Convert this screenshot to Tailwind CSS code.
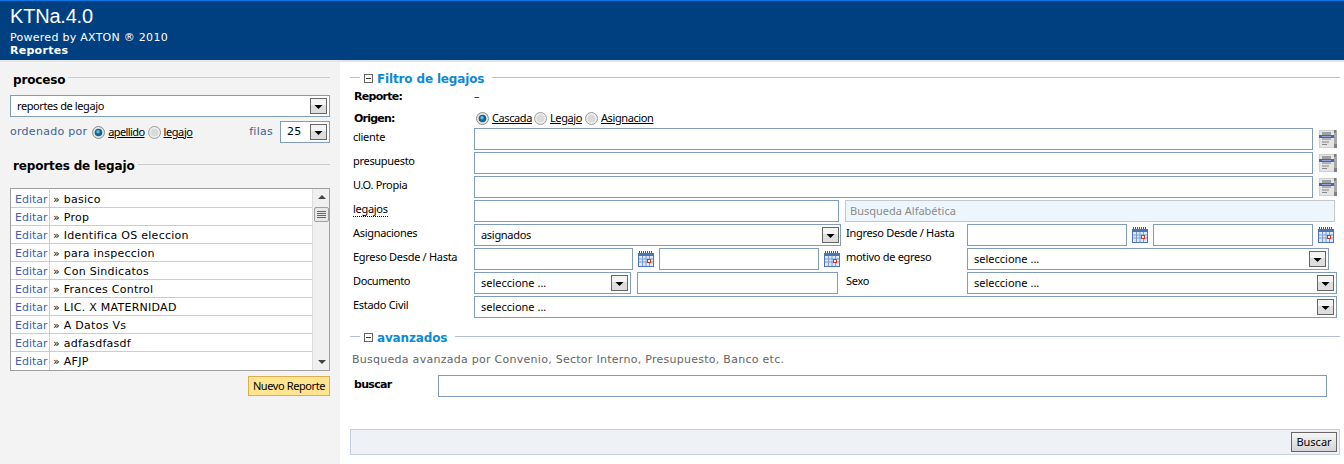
<!DOCTYPE html>
<html lang="es">
<head>
<meta charset="utf-8">
<title>KTNa.4.0</title>
<script src="https://cdn.jsdelivr.net/npm/@tailwindcss/browser@4"></script>
</head>
<body class="w-[1344px] h-[464px] overflow-hidden bg-white text-black font-['DejaVu_Sans',sans-serif] text-[11px] leading-[14px] tracking-[0.27px]">
<svg width="0" height="0" class="absolute">
  <defs>
    <symbol id="cal" viewBox="0 0 16 16">
      <rect x="0" y="2" width="16" height="14" fill="#4a74b8"/>
      <rect x="1" y="5" width="14" height="10" fill="#dfe8f6"/>
      <path d="M1 8h14M1 11h14M4.500 5v10M8 5v10M11.500 5v10" stroke="#7c9ccf" stroke-width="1" fill="none"/>
      <path d="M1 1h14" stroke="#555" stroke-width="2" stroke-dasharray="1 1"/>
      <rect x="9.500" y="8.500" width="3" height="3" fill="#fff" stroke="#e03020" stroke-width="1"/>
    </symbol>
    <symbol id="lookup" viewBox="0 0 18 18">
      <rect width="18" height="18" fill="#cfcfcf"/>
      <rect x="15" y="0" width="3" height="18" fill="#a8a8a8"/>
      <rect x="15" y="0" width="2" height="3" fill="#808080"/>
      <rect x="15" y="14" width="3" height="4" fill="#808080"/>
      <rect x="1" y="1" width="14" height="16" fill="#e4e4e4"/>
      <rect x="3" y="2" width="9" height="3" fill="#a0a0a0"/>
      <rect x="0" y="5" width="15" height="3" fill="#4a64ae"/>
      <rect x="3" y="6" width="9" height="1" fill="#8ea4da"/>
      <rect x="3" y="8" width="9" height="2" fill="#b0b0b0"/>
      <path d="M3 12h7M3 14.500h5" stroke="#858585" stroke-width="1"/>
    </symbol>
    <symbol id="radio-on" viewBox="0 0 13 13">
      <circle cx="6.500" cy="6.500" r="6" fill="#e4e4e4" stroke="#8c8c8c"/>
      <circle cx="6.500" cy="6.500" r="3.800" fill="#14648f"/>
      <circle cx="6" cy="5.800" r="1.700" fill="#5cc0e6"/>
    </symbol>
    <symbol id="radio-off" viewBox="0 0 13 13">
      <circle cx="6.500" cy="6.500" r="6" fill="#ededed" stroke="#9c9c9c"/>
      <circle cx="6.500" cy="6.500" r="3.800" fill="#dadada"/>
    </symbol>
    <symbol id="arrow" viewBox="0 0 17 16">
      <rect x="0.500" y="0.500" width="16" height="15" fill="#dedede" stroke="#666"/>
      <rect x="1" y="1" width="15" height="6" fill="#f4f4f4"/>
      <path d="M4.500 7h8l-4 4z" fill="#000"/>
    </symbol>
    <symbol id="minus" viewBox="0 0 9 9">
      <rect x="0.500" y="0.500" width="8" height="8" fill="#fff" stroke="#666"/>
      <path d="M2 4.500h5" stroke="#333"/>
    </symbol>
  </defs>
</svg>

<header class="h-[60px] bg-[#003f80] border-t border-[#0a78e6] pl-[10px] text-white">
  <div class="pt-[3px] h-[27px] font-['Liberation_Sans',sans-serif] text-[20px] tracking-[-0.2px] leading-[24px]">KTNa.4.0</div>
  <div class="text-[11px] leading-[14px] mt-[3px]">Powered by AXTON ® 2010</div>
  <div class="text-[11px] leading-[12px] font-bold">Reportes</div>
</header>

<div class="flex h-[404px]">
  <aside class="w-[340px] h-full bg-[#f3f3f3] border-t-2 border-[#e6e6e6] pl-[10px] pr-[10px]">
    <div class="flex items-center h-[20px] mt-[7px] pl-[3px]">
      <span class="font-bold text-[12px] tracking-[-0.15px] pt-[2px]">proceso</span>
      <span class="flex-1 h-px bg-[#cccccc] ml-[3px] -mt-[3px]"></span>
    </div>
    <div class="flex items-center justify-between h-[22px] mt-[6px] bg-white border border-[#7f9db9] pl-[6px] pr-[2px] font-['Noto_Sans',sans-serif] text-[11px] tracking-[-0.4px]">
      <span>reportes de legajo</span>
      <svg width="17" height="16"><use href="#arrow"/></svg>
    </div>
    <div class="flex items-center h-[22px] mt-[4px]">
      <span class="text-[#3f5f95]">ordenado por</span>
      <svg width="13" height="13" class="ml-[5px]"><use href="#radio-on"/></svg>
      <span class="ml-[3px] underline font-['Noto_Sans',sans-serif] tracking-[-0.6px]">apellido</span>
      <svg width="13" height="13" class="ml-[3px]"><use href="#radio-off"/></svg>
      <span class="ml-[3px] underline font-['Noto_Sans',sans-serif] tracking-[-0.4px]">legajo</span>
      <span class="ml-auto text-[#3f5f95]">filas</span>
      <div class="flex items-center justify-between w-[50px] h-[22px] ml-[7px] bg-white border border-[#7f9db9] pl-[6px] pr-[2px]">
        <span>25</span>
        <svg width="17" height="16"><use href="#arrow"/></svg>
      </div>
    </div>
    <div class="flex items-center h-[20px] mt-[13px] pl-[3px]">
      <span class="font-bold text-[12px] tracking-[-0.15px]">reportes de legajo</span>
      <span class="flex-1 h-px bg-[#cccccc] ml-[3px] -mt-[3px]"></span>
    </div>
    <div class="flex h-[183px] mt-[12px] border border-[#a0a0a0] bg-white">
      <ul class="w-[301px] flex flex-col pt-px">
        <li class="flex h-[18px] leading-[20px] border-b border-[#cccccc] pl-px"><a class="w-[38px] h-[17px] border-r border-[#cccccc] pl-[3px] text-[#3f5fb0] tracking-normal">Editar</a><span class="pl-[3px]">» basico</span></li>
        <li class="flex h-[18px] leading-[20px] border-b border-[#cccccc] pl-px"><a class="w-[38px] h-[17px] border-r border-[#cccccc] pl-[3px] text-[#3f5fb0] tracking-normal">Editar</a><span class="pl-[3px]">» Prop</span></li>
        <li class="flex h-[18px] leading-[20px] border-b border-[#cccccc] pl-px"><a class="w-[38px] h-[17px] border-r border-[#cccccc] pl-[3px] text-[#3f5fb0] tracking-normal">Editar</a><span class="pl-[3px]">» Identifica OS eleccion</span></li>
        <li class="flex h-[18px] leading-[20px] border-b border-[#cccccc] pl-px"><a class="w-[38px] h-[17px] border-r border-[#cccccc] pl-[3px] text-[#3f5fb0] tracking-normal">Editar</a><span class="pl-[3px]">» para inspeccion</span></li>
        <li class="flex h-[18px] leading-[20px] border-b border-[#cccccc] pl-px"><a class="w-[38px] h-[17px] border-r border-[#cccccc] pl-[3px] text-[#3f5fb0] tracking-normal">Editar</a><span class="pl-[3px]">» Con Sindicatos</span></li>
        <li class="flex h-[18px] leading-[20px] border-b border-[#cccccc] pl-px"><a class="w-[38px] h-[17px] border-r border-[#cccccc] pl-[3px] text-[#3f5fb0] tracking-normal">Editar</a><span class="pl-[3px]">» Frances Control</span></li>
        <li class="flex h-[18px] leading-[20px] border-b border-[#cccccc] pl-px"><a class="w-[38px] h-[17px] border-r border-[#cccccc] pl-[3px] text-[#3f5fb0] tracking-normal">Editar</a><span class="pl-[3px]">» LIC. X MATERNIDAD</span></li>
        <li class="flex h-[18px] leading-[20px] border-b border-[#cccccc] pl-px"><a class="w-[38px] h-[17px] border-r border-[#cccccc] pl-[3px] text-[#3f5fb0] tracking-normal">Editar</a><span class="pl-[3px]">» A Datos Vs</span></li>
        <li class="flex h-[18px] leading-[20px] border-b border-[#cccccc] pl-px"><a class="w-[38px] h-[17px] border-r border-[#cccccc] pl-[3px] text-[#3f5fb0] tracking-normal">Editar</a><span class="pl-[3px]">» adfasdfasdf</span></li>
        <li class="flex h-[18px] leading-[20px] pl-px"><a class="w-[38px] h-[18px] border-r border-[#cccccc] pl-[3px] text-[#3f5fb0] tracking-normal">Editar</a><span class="pl-[3px]">» AFJP</span></li>
      </ul>
      <div class="relative flex-1 bg-[#f0f0f0] border-l border-[#dddddd]">
        <span class="absolute left-[5px] top-[6px] w-0 h-0 border-x-[4px] border-x-transparent border-b-[4px] border-b-[#444]"></span>
        <div class="absolute left-[1px] top-[18px] w-[15px] h-[15px] bg-[#e8e8e8] border border-[#a0a0a0] rounded-[2px] flex flex-col items-center justify-center gap-px">
          <span class="w-[9px] h-px bg-[#666]"></span><span class="w-[9px] h-px bg-[#666]"></span><span class="w-[9px] h-px bg-[#666]"></span><span class="w-[9px] h-px bg-[#666]"></span>
        </div>
        <span class="absolute left-[5px] bottom-[6px] w-0 h-0 border-x-[4px] border-x-transparent border-t-[4px] border-t-[#444]"></span>
      </div>
    </div>
    <div class="flex justify-end mt-[5px]">
      <button class="w-[82px] h-[20px] bg-[#ffe58f] border border-[#e0ac50] font-['Noto_Sans',sans-serif] text-[11px] tracking-[-0.4px] leading-[18px] text-center">Nuevo Reporte</button>
    </div>
  </aside>

  <main class="flex-1 border-t-2 border-[#dfe4f0] pl-[10px] pr-[4px]">
    <div class="flex items-center h-[16px] mt-[8px]">
      <span class="w-[10px] h-px mb-px bg-[#b4c0d8]"></span>
      <svg width="9" height="9" class="ml-[4px]"><use href="#minus"/></svg>
      <span class="ml-[4px] pt-[2px] font-bold text-[12px] tracking-[-0.15px] text-[#0a8ad8]">Filtro de legajos</span>
      <span class="flex-1 h-px mb-px bg-[#b4c0d8] ml-[8px]"></span>
    </div>
    <div class="flex items-center h-[14px] mt-[4px] pl-[4px]">
      <span class="w-[120px] font-bold tracking-[-0.7px]">Reporte:</span><span>–</span>
    </div>
    <div class="flex items-center h-[14px] mt-[7px] pl-[4px] font-['Noto_Sans',sans-serif] tracking-[-0.4px]">
      <span class="w-[120px] mt-[2px] font-bold font-['DejaVu_Sans',sans-serif] tracking-[-0.8px]">Origen:</span>
      <svg width="13" height="13" class="ml-[2px]"><use href="#radio-on"/></svg>
      <span class="ml-[3px] underline">Cascada</span>
      <svg width="13" height="13" class="ml-[2px]"><use href="#radio-off"/></svg>
      <span class="ml-[3px] underline">Legajo</span>
      <svg width="13" height="13" class="ml-[3px]"><use href="#radio-off"/></svg>
      <span class="ml-[3px] underline">Asignacion</span>
    </div>

    <div class="flex flex-col gap-[2px] mt-[3px] font-['Noto_Sans',sans-serif] tracking-[-0.3px]">
      <div class="flex h-[22px]">
        <span class="w-[124px] pl-[3px] pt-[2px]">cliente</span>
        <div class="w-[839px] border border-[#7f9db9] bg-white"></div>
        <svg width="18" height="18" class="ml-[6px] mt-[2px]"><use href="#lookup"/></svg>
      </div>
      <div class="flex h-[22px]">
        <span class="w-[124px] pl-[3px] pt-[2px]">presupuesto</span>
        <div class="w-[839px] border border-[#7f9db9] bg-white"></div>
        <svg width="18" height="18" class="ml-[6px] mt-[2px]"><use href="#lookup"/></svg>
      </div>
      <div class="flex h-[22px]">
        <span class="w-[124px] pl-[3px] pt-[2px]">U.O. Propia</span>
        <div class="w-[839px] border border-[#7f9db9] bg-white"></div>
        <svg width="18" height="18" class="ml-[6px] mt-[2px]"><use href="#lookup"/></svg>
      </div>
      <div class="flex h-[22px]">
        <span class="w-[124px] pl-[3px] pt-[2px]"><span class="border-b border-dotted border-black">legajos</span></span>
        <div class="w-[365px] border border-[#7f9db9] bg-white"></div>
        <div class="w-[490px] ml-[6px] border border-[#c4c8cc] bg-[#eef6fd] pl-[4px] leading-[20px] text-[#8a8a8a] tracking-normal">Busqueda Alfabética</div>
      </div>
      <div class="flex h-[22px]">
        <span class="w-[124px] pl-[3px] pt-[2px]">Asignaciones</span>
        <div class="flex items-center justify-between w-[367px] border border-[#7f9db9] bg-white pl-[6px] pr-[1px]"><span>asignados</span><svg width="17" height="16"><use href="#arrow"/></svg></div>
        <span class="w-[126px] pl-[5px] pt-[2px]">Ingreso Desde / Hasta</span>
        <div class="w-[160px] border border-[#7f9db9] bg-white"></div>
        <svg width="16" height="16" class="ml-[5px] mt-[3px]"><use href="#cal"/></svg>
        <div class="w-[160px] ml-[5px] border border-[#7f9db9] bg-white"></div>
        <svg width="16" height="16" class="ml-[5px] mt-[3px]"><use href="#cal"/></svg>
      </div>
      <div class="flex h-[22px]">
        <span class="w-[124px] pl-[3px] pt-[2px]">Egreso Desde / Hasta</span>
        <div class="w-[159px] border border-[#7f9db9] bg-white"></div>
        <svg width="16" height="16" class="ml-[5px] mt-[3px]"><use href="#cal"/></svg>
        <div class="w-[160px] ml-[5px] border border-[#7f9db9] bg-white"></div>
        <svg width="16" height="16" class="ml-[5px] mt-[3px]"><use href="#cal"/></svg>
        <span class="w-[127px] pl-[6px] pt-[2px]">motivo de egreso</span>
        <div class="flex items-center justify-between w-[362px] border border-[#7f9db9] bg-white pl-[6px] pr-[2px] tracking-normal"><span>seleccione ...</span><svg width="17" height="16"><use href="#arrow"/></svg></div>
      </div>
      <div class="flex h-[22px]">
        <span class="w-[124px] pl-[3px] pt-[2px] tracking-[-0.4px]">Documento</span>
        <div class="flex items-center justify-between w-[157px] border border-[#7f9db9] bg-white pl-[6px] pr-[2px] tracking-normal"><span>seleccione ...</span><svg width="17" height="16"><use href="#arrow"/></svg></div>
        <div class="w-[201px] ml-[6px] border border-[#7f9db9] bg-white"></div>
        <span class="w-[129px] pl-[8px] pt-[2px]">Sexo</span>
        <div class="flex items-center justify-between w-[370px] border border-[#7f9db9] bg-white pl-[6px] pr-[2px] tracking-normal"><span>seleccione ...</span><svg width="17" height="16"><use href="#arrow"/></svg></div>
      </div>
      <div class="flex h-[22px]">
        <span class="w-[124px] pl-[3px] pt-[2px]">Estado Civil</span>
        <div class="flex items-center justify-between w-[863px] border border-[#7f9db9] bg-white pl-[6px] pr-[2px] tracking-normal"><span>seleccione ...</span><svg width="17" height="16"><use href="#arrow"/></svg></div>
      </div>
    </div>

    <div class="flex items-center h-[16px] mt-[11px]">
      <span class="w-[10px] h-px mb-px bg-[#b4c0d8]"></span>
      <svg width="9" height="9" class="ml-[4px]"><use href="#minus"/></svg>
      <span class="ml-[4px] pt-[2px] font-bold text-[12px] tracking-[-0.15px] text-[#0a8ad8]">avanzados</span>
      <span class="flex-1 h-px mb-px bg-[#b4c0d8] ml-[8px]"></span>
    </div>
    <p class="h-[14px] mt-[8px] pl-[2px] text-[#666666]">Busqueda avanzada por Convenio, Sector Interno, Presupuesto, Banco etc.</p>
    <div class="flex h-[22px] mt-[8px]">
      <span class="w-[88px] pl-[4px] pt-[3px] font-bold tracking-[-0.7px]">buscar</span>
      <div class="w-[889px] border border-[#7f9db9] bg-white"></div>
    </div>
    <div class="flex items-center justify-end w-[990px] h-[26px] mt-[32px] bg-[#eef1f5] border border-[#c5d0dc] pr-[2px]">
      <button class="w-[46px] h-[20px] border border-[#666] bg-linear-to-b from-[#f6f6f6] to-[#d4d4d4] font-['Noto_Sans',sans-serif] text-[11px] tracking-normal leading-[16px]">Buscar</button>
    </div>
  </main>
</div>
</body>
</html>
